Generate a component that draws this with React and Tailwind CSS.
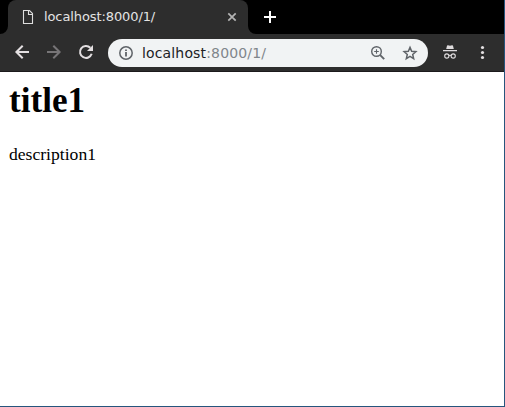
import React from 'react';

function Tab() {
  return (
    <div className="flex h-[34px] w-[240px] items-center rounded-t-[8px] bg-[#2d2d2d] pl-3 pr-2">
      <svg className="h-4 w-4 shrink-0" viewBox="0 0 16 16" fill="none" stroke="#dedede" strokeWidth="1.1">
        <path d="M3.5 1.5H9.5L12.5 4.5V14.5H3.5Z M8.5 1.5V5.5H12.5" />
      </svg>
      <span className="ml-2 flex-1 whitespace-nowrap text-[13px] leading-4 tracking-[-0.1px] text-[#e4e4e4]">
        localhost:8000/1/
      </span>
      <svg className="h-4 w-4 shrink-0" viewBox="0 0 16 16" stroke="#b4b4b4" strokeWidth="1.7">
        <path d="M4.3 4.3L11.7 11.7M11.7 4.3L4.3 11.7" />
      </svg>
    </div>
  );
}

function TabStrip() {
  return (
    <div className="flex h-[34px] bg-black">
      <div className="flex w-2 items-end">
        <svg className="h-2 w-2" viewBox="0 0 8 8" fill="#2d2d2d">
          <path d="M8 0V8H0A8 8 0 0 0 8 0Z" />
        </svg>
      </div>
      <Tab />
      <div className="flex w-2 items-end">
        <svg className="h-2 w-2" viewBox="0 0 8 8" fill="#2d2d2d">
          <path d="M0 0V8H8A8 8 0 0 1 0 0Z" />
        </svg>
      </div>
      <svg className="ml-1.5 mt-[9px] h-4 w-4" viewBox="0 0 16 16" stroke="#fff" strokeWidth="2">
        <path d="M8 2V14M2 8H14" />
      </svg>
    </div>
  );
}

function Toolbar() {
  return (
    <div className="flex h-[38px] items-start border-b border-[#1c1a1c] bg-[#2d2d2d] pl-3.5">
      <svg className="mt-2.5 h-4 w-4 shrink-0" viewBox="0 0 16 16" fill="none" stroke="#e3dfe1" strokeWidth="2">
        <path d="M15 8H2.5M8.7 1.7L2.4 8L8.7 14.3" />
      </svg>
      <svg className="ml-4 mt-2.5 h-4 w-4 shrink-0" viewBox="0 0 16 16" fill="none" stroke="#777577" strokeWidth="2">
        <path d="M1 8H13.5M7.3 1.7L13.6 8L7.3 14.3" />
      </svg>
      <svg className="ml-4 mt-2.5 h-4 w-4 shrink-0" viewBox="0 0 16 16">
        <path d="M12.3 3.7A6 6 0 1 0 13.7 9.8" fill="none" stroke="#e3dfe1" strokeWidth="2" />
        <path d="M15 1V7H9Z" fill="#e3dfe1" />
      </svg>
      <div className="ml-3.5 mt-[5px] flex h-7 w-[320px] shrink-0 items-center rounded-full bg-[#f1f3f4] px-2.5">
        <svg className="h-4 w-4 shrink-0" viewBox="0 0 16 16">
          <circle cx="8" cy="8" r="6.2" fill="none" stroke="#5f6368" strokeWidth="1.5" />
          <path d="M8 7V11.5M8 4.4V6" stroke="#5f6368" strokeWidth="1.8" />
        </svg>
        <span className="ml-2 flex-1 whitespace-nowrap text-[14px] leading-5 tracking-[0.15px] text-[#202124]">
          localhost<span className="text-[#80868b]">:8000/1/</span>
        </span>
        <svg className="h-4 w-4 shrink-0" viewBox="0 0 16 16" fill="none" stroke="#5f6368">
          <circle cx="6.5" cy="6.5" r="4.8" strokeWidth="1.4" />
          <path d="M10.2 10.2L14.2 14.2" strokeWidth="1.9" />
          <path d="M6.5 4.2V8.8M4.2 6.5H8.8" strokeWidth="1.1" />
        </svg>
        <svg className="ml-4 h-4 w-4 shrink-0" viewBox="0 0 16 16" fill="none" stroke="#5f6368" strokeWidth="1.5">
          <path d="M8 2.4L9.65 6.3L13.9 6.7L10.7 9.5L11.65 13.6L8 11.4L4.35 13.6L5.3 9.5L2.1 6.7L6.35 6.3Z" />
        </svg>
      </div>
      <svg className="ml-3.5 mt-2.5 h-4 w-4 shrink-0" viewBox="0 0 16 16">
        <path d="M4.2 5L5 1.7Q5.2 1.1 6 1.3L8 1.8L10 1.3Q10.8 1.1 11 1.7L11.8 5ZM1 6H15V7.2H1Z" fill="#dedbdd" />
        <g fill="none" stroke="#dedbdd" strokeWidth="1.1">
          <circle cx="4.8" cy="12" r="2.1" />
          <circle cx="11.2" cy="12" r="2.1" />
          <path d="M6.8 11.6Q8 10.9 9.2 11.6" />
        </g>
      </svg>
      <svg className="ml-4 mt-2.5 h-4 w-4 shrink-0" viewBox="0 0 16 16" fill="#e3dfe1">
        <circle cx="8.5" cy="3.5" r="1.6" />
        <circle cx="8.5" cy="8.5" r="1.6" />
        <circle cx="8.5" cy="13.5" r="1.6" />
      </svg>
    </div>
  );
}

export default function App() {
  return (
    <div className="flex h-[407px] w-[505px] flex-col overflow-hidden border-b border-r border-[#26557d] bg-white font-['DejaVu_Sans',sans-serif]">
      <TabStrip />
      <Toolbar />
      <main className="px-[9px] pt-[9px] font-['Liberation_Serif',serif] text-black">
        <h1 className="text-[35.2px] font-bold leading-10">title1</h1>
        <p className="mt-[23px] text-[17.6px] leading-5">description1</p>
      </main>
    </div>
  );
}
